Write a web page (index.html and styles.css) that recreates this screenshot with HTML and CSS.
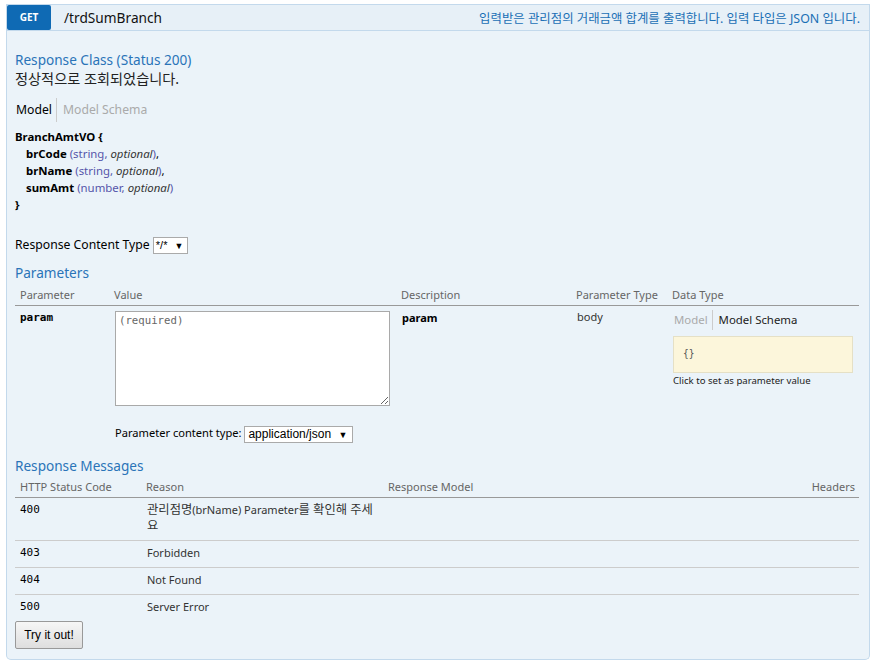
FILE: index.html
```html
<!DOCTYPE html>
<html lang="ko">
<head>
<meta charset="utf-8">
<title>/trdSumBranch</title>
<link rel="stylesheet" href="styles.css">
</head>
<body>
<div class="operation">
  <div class="heading">
    <span class="method">GET</span>
    <span class="path">/trdSumBranch</span>
    <span class="summary">입력받은 관리점의 거래금액 합계를 출력합니다. 입력 타입은 JSON 입니다.</span>
  </div>
  <div class="content">
    <h4 class="title">Response Class (Status 200)</h4>
    <div class="markdown">정상적으로 조회되었습니다.</div>
    <div class="tabs tabs-main">
      <span class="tab tab-on">Model</span><span class="tab tab-off">Model Schema</span>
    </div>
    <div class="signature">
      <div class="model-line"><b>BranchAmtVO {</b></div>
      <div class="prop"><b>brCode</b> <span class="ptype">(string, <i>optional</i>)</span>,</div>
      <div class="prop"><b>brName</b> <span class="ptype">(string, <i>optional</i>)</span>,</div>
      <div class="prop"><b>sumAmt</b> <span class="ptype">(number, <i>optional</i>)</span></div>
      <div class="model-line"><b>}</b></div>
    </div>
    <div class="content-type">Response Content Type <span class="select">*/* <span class="arrow">▼</span></span></div>

    <h4 class="title">Parameters</h4>
    <table class="params">
      <colgroup><col class="c-param"><col class="c-value"><col class="c-desc"><col class="c-ptype"><col></colgroup>
      <thead>
        <tr><th>Parameter</th><th>Value</th><th>Description</th><th>Parameter Type</th><th>Data Type</th></tr>
      </thead>
      <tbody>
        <tr>
          <td class="code">param</td>
          <td>
            <textarea class="body-input" placeholder="(required)"></textarea>
            <div class="param-ct">Parameter content type: <span class="select">application/json <span class="arrow">▼</span></span></div>
          </td>
          <td class="desc">param</td>
          <td class="ptype-cell">body</td>
          <td>
            <div class="tabs tabs-small"><span class="tab tab-off">Model</span><span class="tab tab-dark">Model Schema</span></div>
            <div class="snippet">{}</div>
            <div class="hint">Click to set as parameter value</div>
          </td>
        </tr>
      </tbody>
    </table>

    <h4 class="title">Response Messages</h4>
    <table class="responses">
      <colgroup><col class="c-code"><col class="c-reason"><col class="c-model"><col></colgroup>
      <thead>
        <tr><th>HTTP Status Code</th><th>Reason</th><th>Response Model</th><th class="right">Headers</th></tr>
      </thead>
      <tbody>
        <tr><td class="code">400</td><td><span class="ko">관리점명</span>(brName) Parameter<span class="ko">를 확인해 주세요</span></td><td></td><td></td></tr>
        <tr><td class="code">403</td><td>Forbidden</td><td></td><td></td></tr>
        <tr><td class="code">404</td><td>Not Found</td><td></td><td></td></tr>
        <tr><td class="code">500</td><td>Server Error</td><td></td><td></td></tr>
      </tbody>
    </table>
    <button class="try">Try it out!</button>
  </div>
</div>
</body>
</html>
```
FILE: styles.css
```css
html, body {
  margin: 0;
  background: #ffffff;
}
body {
  padding: 4px 6px 0 6px;
  font-family: "Noto Sans", "Noto Sans CJK KR", sans-serif;
  font-size: 12.2px;
  color: #222;
}
.heading {
  display: flex;
  align-items: center;
  height: 25px;
  background: #e7f0f7;
  border: 1px solid #c3d9ec;
}
.method {
  width: 44px;
  height: 25px;
  line-height: 25px;
  background: #0f6ab4;
  color: #fff;
  font-weight: bold;
  font-size: 10px;
  text-align: center;
  border-radius: 2px;
  flex: none;
}
.path {
  margin-left: 13px;
  font-size: 13.7px;
  color: #111;
}
.summary {
  margin-left: auto;
  margin-right: 9px;
  font-size: 12.4px;
  color: #1a6fb5;
}
.content {
  background: #ebf3f9;
  border: 1px solid #c3d9ec;
  border-top: none;
  border-radius: 0 0 5px 5px;
  padding: 19px 10px 10px 8px;
}
.title {
  margin: 0;
  font-weight: normal;
  font-size: 13.6px;
  line-height: 20px;
  color: #2a74b8;
}
.markdown {
  font-size: 14.2px;
  line-height: 18px;
  color: #222;
}
.tabs {
  display: flex;
  align-items: center;
}
.tabs-main {
  margin-top: 10px;
  height: 24px;
}
.tab {
  padding: 0 0 0 6px;
  line-height: 24px;
}
.tab:first-child {
  padding: 0 4px 0 1px;
  border-right: 1px solid #ccc;
}
.tab-on { color: #000; }
.tab-off { color: #aaa; }
.tab-dark { color: #222; }
.signature {
  margin-top: 6px;
  font-size: 11.4px;
  line-height: 17px;
  color: #000;
}
.prop { padding-left: 11px; }
.ptype { color: #55a; }
.ptype i { color: #333; }
.content-type {
  margin-top: 22px;
  line-height: 20px;
  color: #000;
}
.select {
  display: inline-block;
  background: #fff;
  border: 1px solid #aaa;
  font-family: "Liberation Sans", sans-serif;
  font-size: 12px;
  line-height: 14px;
  padding: 0 5px 0 3px;
  color: #000;
  vertical-align: middle;
}
.content-type .select {
  font-size: 11px;
  padding: 0 4px 0 2px;
}
.arrow {
  font-size: 9px;
  margin-left: 4px;
}
.content-type + .title { margin-top: 8px; }
table {
  width: 100%;
  border-collapse: collapse;
  table-layout: fixed;
}
th {
  text-align: left;
  font-weight: normal;
  color: #666;
  font-size: 11px;
  line-height: 16px;
  padding: 4px 5px 2px;
  border-bottom: 1px solid #999;
  white-space: nowrap;
}
.responses th { padding-top: 3px; }
th.right { text-align: right; padding-right: 4px; }
td {
  vertical-align: top;
  font-size: 11px;
  line-height: 16px;
  padding: 4px 6px 6px 6px;
  color: #333;
}
td .ko { font-size: 12.3px; line-height: 12px; }
td.code {
  font-family: "DejaVu Sans Mono", monospace;
  font-size: 11px;
  color: #000;
  padding-left: 5px;
}
.params td.code { font-weight: bold; }
.c-param { width: 94px; }
.c-value { width: 287px; }
.c-desc { width: 175px; }
.c-ptype { width: 96px; }
.params td { padding-top: 5px; padding-bottom: 13px; line-height: 14px; }
.params td.ptype-cell { padding-top: 4px; }
td.desc { font-weight: bold; color: #000; }
.body-input {
  display: block;
  box-sizing: border-box;
  width: 275px;
  height: 95px;
  margin: 0;
  border: 1px solid #a9a9a9;
  padding: 2px 3px;
  font-family: "DejaVu Sans Mono", monospace;
  font-size: 10.7px;
  background: #fff;
}
.body-input::placeholder { color: #666; }
.param-ct {
  margin-top: 18px;
  font-size: 11.1px;
  line-height: 18px;
  color: #000;
}
.tabs-small .tab { line-height: 20px; }
.tabs-small { margin-top: -1px; font-size: 11.4px; }
.snippet {
  margin-top: 6px;
  height: 37px;
  box-sizing: border-box;
  width: 180px;
  background: #fcf6db;
  border: 1px solid #e5e0c6;
  padding: 10px 9px;
  font-family: "DejaVu Sans Mono", monospace;
  font-size: 9.6px;
  line-height: 14px;
  color: #555;
}
.hint {
  font-size: 9.6px;
  line-height: 16px;
  color: #222;
}
.params + .title { margin-top: 0; }
.c-code { width: 126px; }
.c-reason { width: 242px; }
.c-model { width: 300px; }
.responses td { padding-top: 4px; padding-bottom: 6px; }
.responses tr:not(:last-child) td { border-bottom: 1px solid #ccc; }
.try {
  display: block;
  width: 68px;
  height: 28px;
  padding: 0;
  background: linear-gradient(#f6f6f6, #dedede);
  border: 1px solid #999;
  border-radius: 2px;
  font-family: "Liberation Sans", sans-serif;
  font-size: 12px;
  color: #000;
}
```
